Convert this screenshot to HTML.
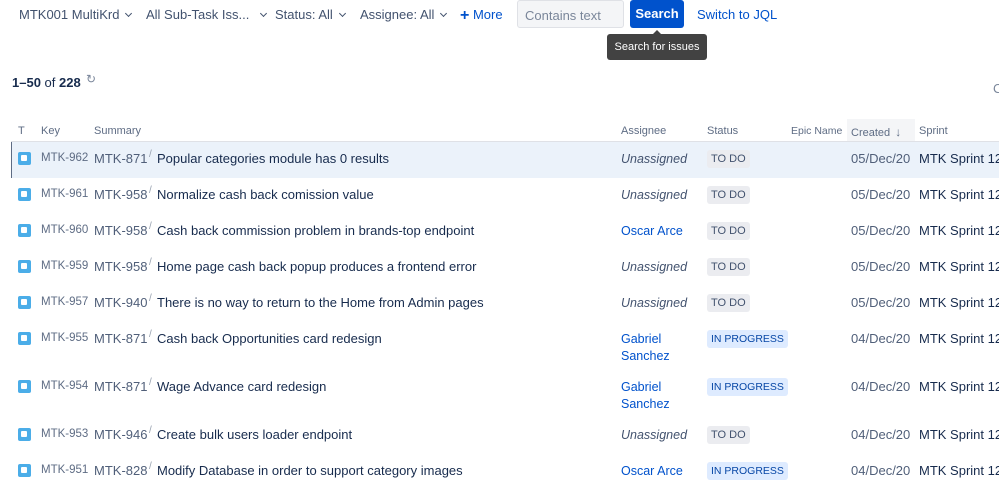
<!DOCTYPE html>
<html><head><meta charset="utf-8"><style>
*{margin:0;padding:0;box-sizing:border-box}
body{width:999px;height:474px;overflow:hidden;background:#fff;font-family:"Liberation Sans",sans-serif;color:#172b4d;position:relative}
.a{position:absolute;white-space:nowrap}
.f{font-size:13px;color:#42526e;top:7px}
.chev{display:inline-block;width:5px;height:5px;border-right:1.3px solid #42526e;border-bottom:1.3px solid #42526e;transform:rotate(45deg);margin-left:7px;position:relative;top:-3px}
.h{font-size:11px;color:#5e6c84;top:125px}
.ic{position:absolute;left:18px;width:13px;height:13px;background:#4bade8;border-radius:2px}
.ic:after{content:"";position:absolute;left:3px;top:3px;width:6px;height:6px;background:#fff;border-radius:1px}
.k{font-size:11.5px;color:#5e6c84;left:41px}
.p{font-size:13px;color:#505f79;left:94px}
.sl{font-size:10px;color:#97a0af;left:149px}
.s{font-size:13px;color:#172b4d;left:157px}
.as{font-size:12.5px;left:621px;line-height:17px}
.un{font-style:italic;color:#42526e}
.nm{color:#0052cc}
.b{left:707px;font-size:11px;padding:3px 4px;border-radius:3px}
.td{background:#ebecf0;color:#42526e}
.ip{background:#deebff;color:#0747a6;font-size:10.5px}
.d{font-size:13px;color:#505f79;left:851px}
.sp{font-size:13px;color:#172b4d;left:919px}
</style></head><body>
<div class="a f" style="left:19px">MTK001 MultiKrd<span class="chev"></span></div>
<div class="a f" style="left:146px">All Sub-Task Iss...<span class="chev" style="margin-left:12px"></span></div>
<div class="a f" style="left:275px">Status: All<span class="chev"></span></div>
<div class="a f" style="left:360px">Assignee: All<span class="chev"></span></div>
<div class="a f" style="left:460px;color:#0052cc;top:6px"><b style="font-size:16px;position:relative;top:1px">+</b> More</div>
<div class="a" style="left:517px;top:0;width:107px;height:28px;background:#f4f5f7;border:1px solid #dfe1e6;border-radius:3px;font-size:13px;color:#7a869a;padding:7px 7px">Contains text</div>
<div class="a" style="left:630px;top:0;width:54px;height:28px;background:#0052cc;border-radius:3px;color:#fff;font-weight:bold;font-size:13px;text-align:center;line-height:28px">Search</div>
<div class="a" style="left:697px;top:7px;font-size:13px;color:#0052cc">Switch to JQL</div>
<div class="a" style="left:653px;top:30px;width:0;height:0;border-left:4px solid transparent;border-right:4px solid transparent;border-bottom:4px solid #424242"></div>
<div class="a" style="left:607px;top:34px;width:100px;height:26px;background:#424242;border-radius:3px;color:#fff;font-size:11px;text-align:center;line-height:26px">Search for issues</div>
<div class="a" style="left:12px;top:75px;font-size:13px;color:#172b4d"><b>1–50</b> of <b>228</b></div>
<div class="a" style="left:86px;top:72px;font-size:12px;color:#7a869a">↻</div>
<div class="a" style="left:993px;top:81px;font-size:13px;color:#7a869a">C</div>
<div class="a h" style="left:18px">T</div>
<div class="a h" style="left:41px">Key</div>
<div class="a h" style="left:94px">Summary</div>
<div class="a h" style="left:621px">Assignee</div>
<div class="a h" style="left:707px">Status</div>
<div class="a h" style="left:791px;font-size:10.5px">Epic Name</div>
<div class="a" style="left:847px;top:119px;width:68px;height:22px;background:#f4f5f7"></div>
<div class="a h" style="left:851px">Created <b style="font-size:12px;margin-left:2px">↓</b></div>
<div class="a h" style="left:919px">Sprint</div>
<div class="a" style="left:11px;top:141px;width:988px;height:1px;background:#dfe1e6"></div>
<div class="a" style="left:11px;top:142px;width:988px;height:36px;background:#ebf2fa;border-left:1px solid #5e6c84"></div>

<div class="ic" style="top:152px"></div><div class="a k" style="top:152px">MTK-962</div><div class="a p" style="top:151px">MTK-871</div><div class="a sl" style="top:149px">/</div><div class="a s" style="top:151px">Popular categories module has 0 results</div><div class="a as un" style="top:151px">Unassigned</div><div class="a b td" style="top:150px">TO DO</div><div class="a d" style="top:151px">05/Dec/20</div><div class="a sp" style="top:151px">MTK Sprint 12</div>

<div class="ic" style="top:188px"></div><div class="a k" style="top:188px">MTK-961</div><div class="a p" style="top:187px">MTK-958</div><div class="a sl" style="top:185px">/</div><div class="a s" style="top:187px">Normalize cash back comission value</div><div class="a as un" style="top:187px">Unassigned</div><div class="a b td" style="top:186px">TO DO</div><div class="a d" style="top:187px">05/Dec/20</div><div class="a sp" style="top:187px">MTK Sprint 12</div>

<div class="ic" style="top:224px"></div><div class="a k" style="top:224px">MTK-960</div><div class="a p" style="top:223px">MTK-958</div><div class="a sl" style="top:221px">/</div><div class="a s" style="top:223px">Cash back commission problem in brands-top endpoint</div><div class="a as nm" style="top:223px">Oscar Arce</div><div class="a b td" style="top:222px">TO DO</div><div class="a d" style="top:223px">05/Dec/20</div><div class="a sp" style="top:223px">MTK Sprint 12</div>

<div class="ic" style="top:260px"></div><div class="a k" style="top:260px">MTK-959</div><div class="a p" style="top:259px">MTK-958</div><div class="a sl" style="top:257px">/</div><div class="a s" style="top:259px">Home page cash back popup produces a frontend error</div><div class="a as un" style="top:259px">Unassigned</div><div class="a b td" style="top:258px">TO DO</div><div class="a d" style="top:259px">05/Dec/20</div><div class="a sp" style="top:259px">MTK Sprint 12</div>

<div class="ic" style="top:296px"></div><div class="a k" style="top:296px">MTK-957</div><div class="a p" style="top:295px">MTK-940</div><div class="a sl" style="top:293px">/</div><div class="a s" style="top:295px">There is no way to return to the Home from Admin pages</div><div class="a as un" style="top:295px">Unassigned</div><div class="a b td" style="top:294px">TO DO</div><div class="a d" style="top:295px">05/Dec/20</div><div class="a sp" style="top:295px">MTK Sprint 12</div>

<div class="ic" style="top:332px"></div><div class="a k" style="top:332px">MTK-955</div><div class="a p" style="top:331px">MTK-871</div><div class="a sl" style="top:329px">/</div><div class="a s" style="top:331px">Cash back Opportunities card redesign</div><div class="a as nm" style="top:331px">Gabriel<br>Sanchez</div><div class="a b ip" style="top:330px">IN PROGRESS</div><div class="a d" style="top:331px">04/Dec/20</div><div class="a sp" style="top:331px">MTK Sprint 12</div>

<div class="ic" style="top:380px"></div><div class="a k" style="top:380px">MTK-954</div><div class="a p" style="top:379px">MTK-871</div><div class="a sl" style="top:377px">/</div><div class="a s" style="top:379px">Wage Advance card redesign</div><div class="a as nm" style="top:379px">Gabriel<br>Sanchez</div><div class="a b ip" style="top:378px">IN PROGRESS</div><div class="a d" style="top:379px">04/Dec/20</div><div class="a sp" style="top:379px">MTK Sprint 12</div>

<div class="ic" style="top:428px"></div><div class="a k" style="top:428px">MTK-953</div><div class="a p" style="top:427px">MTK-946</div><div class="a sl" style="top:425px">/</div><div class="a s" style="top:427px">Create bulk users loader endpoint</div><div class="a as un" style="top:427px">Unassigned</div><div class="a b td" style="top:426px">TO DO</div><div class="a d" style="top:427px">04/Dec/20</div><div class="a sp" style="top:427px">MTK Sprint 12</div>

<div class="ic" style="top:464px"></div><div class="a k" style="top:464px">MTK-951</div><div class="a p" style="top:463px">MTK-828</div><div class="a sl" style="top:461px">/</div><div class="a s" style="top:463px">Modify Database in order to support category images</div><div class="a as nm" style="top:463px">Oscar Arce</div><div class="a b ip" style="top:462px">IN PROGRESS</div><div class="a d" style="top:463px">04/Dec/20</div><div class="a sp" style="top:463px">MTK Sprint 12</div>
</body></html>
